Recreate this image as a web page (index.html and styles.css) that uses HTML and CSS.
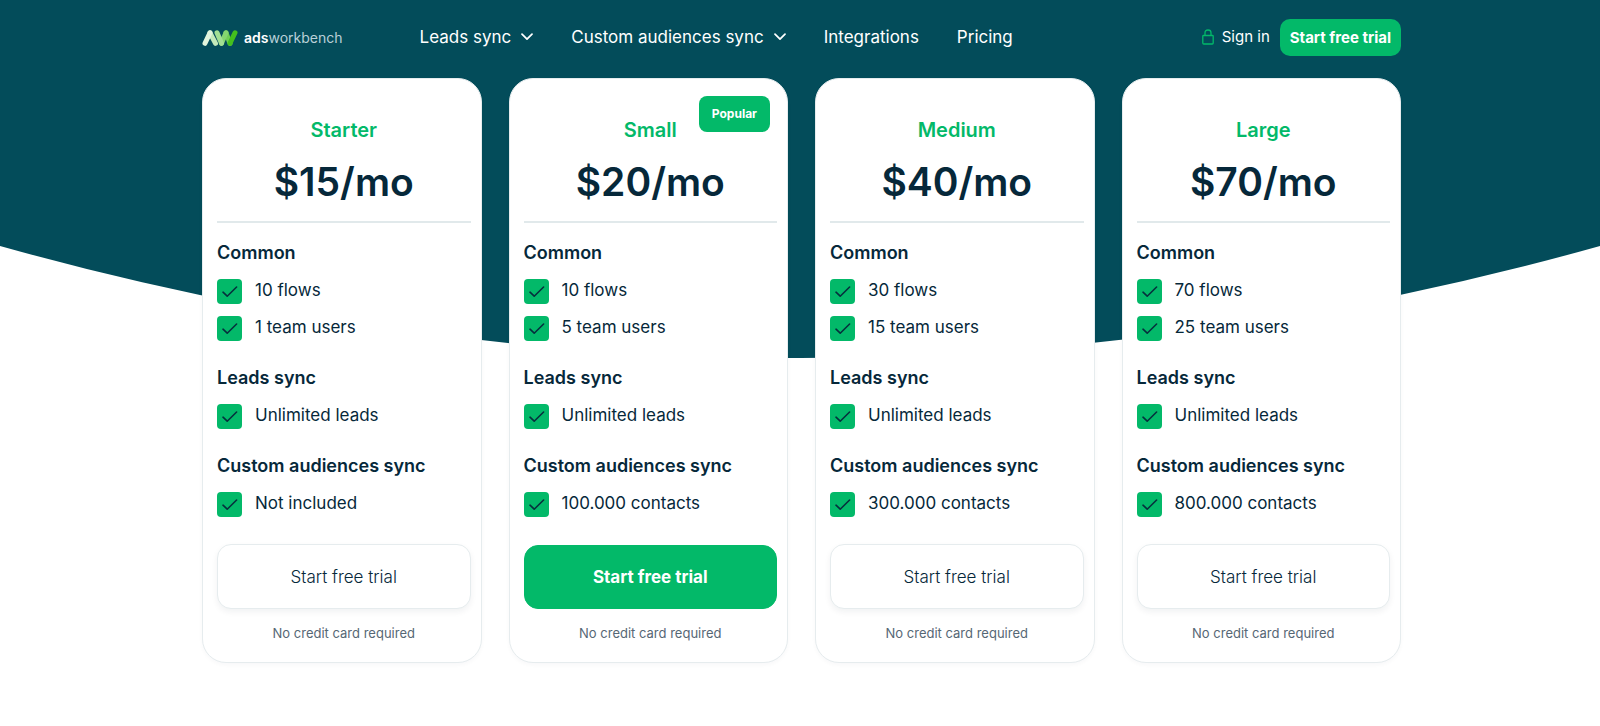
FILE: index.html
```html
<!DOCTYPE html>
<html lang="en">
<head>
<meta charset="utf-8">
<title>Pricing – adsworkbench</title>
<meta name="viewport" content="width=device-width, initial-scale=1">
<link rel="stylesheet" href="styles.css">
</head>
<body>
<svg class="backdrop" viewBox="0 0 1600 358" preserveAspectRatio="none" aria-hidden="true"><path d="M0 0H1600V246Q800 470 0 246Z" fill="#034c5a"/></svg>
<svg class="symbols" aria-hidden="true">
  <symbol id="check" viewBox="0 0 25 25"><path d="M6 13.2L10.2 17.2L19.6 8" fill="none" stroke="#06303d" stroke-width="1.6" stroke-linecap="round" stroke-linejoin="round"/></symbol>
  <symbol id="chevron" viewBox="0 0 12 8"><path d="M1 1.2L6 6.2L11 1.2" fill="none" stroke="#fff" stroke-width="1.7" stroke-linecap="round" stroke-linejoin="round"/></symbol>
</svg>
<div class="page">
  <header class="header">
    <a class="logo" href="#">
      <svg class="logo-mark" viewBox="0 0 36 18" aria-hidden="true" fill="none" stroke-width="5" stroke-linecap="round">
        <path d="M8 3.800L13.500 14.300" stroke="#c3e9ba"/>
        <path d="M3 14.300L8 3.800" stroke="#e2f5dd"/>
        <path d="M24 3.800L28 14.300" stroke="#6fce55"/>
        <path d="M19.500 14.300L24 3.800" stroke="#85d670"/>
        <path d="M15 3.800L19.500 14.300" stroke="#a2df94"/>
        <path d="M28 14.300L33 3.800" stroke="#43c01d"/>
      </svg>
      <span class="logo-text"><b>ads</b>workbench</span>
    </a>
    <nav class="nav">
      <button class="nav-item" type="button">Leads sync <svg class="chevron" aria-hidden="true"><use href="#chevron"/></svg></button>
      <button class="nav-item" type="button">Custom audiences sync <svg class="chevron" aria-hidden="true"><use href="#chevron"/></svg></button>
      <a class="nav-item" href="#">Integrations</a>
      <a class="nav-item" href="#">Pricing</a>
    </nav>
    <div class="account">
      <a class="signin" href="#"><svg class="lock" viewBox="0 0 12 16" aria-hidden="true"><path d="M1.500 6.500H10.500Q11.200 6.500 11.200 7.200V14Q11.200 15 10.200 15H1.800Q.8 15 .8 14V7.200Q.8 6.500 1.500 6.500ZM3 6.500V3.800Q3 1 6 1T9 3.800V6.500" fill="none" stroke="#03b969" stroke-width="1.300"/></svg>Sign in</a>
      <a class="cta" href="#">Start free trial</a>
    </div>
  </header>
  <main class="plans">
    <section class="plan">
      <h2 class="plan-name">Starter</h2>
      <p class="price">$15/mo</p>
      <hr class="rule">
      <h3 class="group">Common</h3>
      <ul class="features">
        <li class="feature"><svg class="check" aria-hidden="true"><use href="#check"/></svg>10 flows</li>
        <li class="feature"><svg class="check" aria-hidden="true"><use href="#check"/></svg>1 team users</li>
      </ul>
      <h3 class="group">Leads sync</h3>
      <ul class="features">
        <li class="feature"><svg class="check" aria-hidden="true"><use href="#check"/></svg>Unlimited leads</li>
      </ul>
      <h3 class="group">Custom audiences sync</h3>
      <ul class="features">
        <li class="feature"><svg class="check" aria-hidden="true"><use href="#check"/></svg>Not included</li>
      </ul>
      <button class="trial" type="button">Start free trial</button>
      <p class="note">No credit card required</p>
    </section>
    <section class="plan">
      <span class="badge">Popular</span>
      <h2 class="plan-name">Small</h2>
      <p class="price">$20/mo</p>
      <hr class="rule">
      <h3 class="group">Common</h3>
      <ul class="features">
        <li class="feature"><svg class="check" aria-hidden="true"><use href="#check"/></svg>10 flows</li>
        <li class="feature"><svg class="check" aria-hidden="true"><use href="#check"/></svg>5 team users</li>
      </ul>
      <h3 class="group">Leads sync</h3>
      <ul class="features">
        <li class="feature"><svg class="check" aria-hidden="true"><use href="#check"/></svg>Unlimited leads</li>
      </ul>
      <h3 class="group">Custom audiences sync</h3>
      <ul class="features">
        <li class="feature"><svg class="check" aria-hidden="true"><use href="#check"/></svg>100.000 contacts</li>
      </ul>
      <button class="trial trial-primary" type="button">Start free trial</button>
      <p class="note">No credit card required</p>
    </section>
    <section class="plan">
      <h2 class="plan-name">Medium</h2>
      <p class="price">$40/mo</p>
      <hr class="rule">
      <h3 class="group">Common</h3>
      <ul class="features">
        <li class="feature"><svg class="check" aria-hidden="true"><use href="#check"/></svg>30 flows</li>
        <li class="feature"><svg class="check" aria-hidden="true"><use href="#check"/></svg>15 team users</li>
      </ul>
      <h3 class="group">Leads sync</h3>
      <ul class="features">
        <li class="feature"><svg class="check" aria-hidden="true"><use href="#check"/></svg>Unlimited leads</li>
      </ul>
      <h3 class="group">Custom audiences sync</h3>
      <ul class="features">
        <li class="feature"><svg class="check" aria-hidden="true"><use href="#check"/></svg>300.000 contacts</li>
      </ul>
      <button class="trial" type="button">Start free trial</button>
      <p class="note">No credit card required</p>
    </section>
    <section class="plan">
      <h2 class="plan-name">Large</h2>
      <p class="price">$70/mo</p>
      <hr class="rule">
      <h3 class="group">Common</h3>
      <ul class="features">
        <li class="feature"><svg class="check" aria-hidden="true"><use href="#check"/></svg>70 flows</li>
        <li class="feature"><svg class="check" aria-hidden="true"><use href="#check"/></svg>25 team users</li>
      </ul>
      <h3 class="group">Leads sync</h3>
      <ul class="features">
        <li class="feature"><svg class="check" aria-hidden="true"><use href="#check"/></svg>Unlimited leads</li>
      </ul>
      <h3 class="group">Custom audiences sync</h3>
      <ul class="features">
        <li class="feature"><svg class="check" aria-hidden="true"><use href="#check"/></svg>800.000 contacts</li>
      </ul>
      <button class="trial" type="button">Start free trial</button>
      <p class="note">No credit card required</p>
    </section>
  </main>
</div>
</body>
</html>
```
FILE: styles.css
```css
* { box-sizing: border-box; }

body {
  margin: 0;
  background: #fff;
  color: #06283a;
  font-family: Inter, "Open Sans", sans-serif;
  font-size: 17px;
  line-height: 24px;
}

h2, h3, p, ul { margin: 0; padding: 0; }
a { color: inherit; text-decoration: none; }
button { font: inherit; cursor: pointer; }

.backdrop {
  position: absolute;
  top: 0;
  left: 0;
  z-index: -1;
  width: 100%;
  height: 358px;
}

.symbols { position: absolute; width: 0; height: 0; }

.page {
  max-width: 1202px;
  margin: 0 auto;
  padding: 0 0 60px 3px;
}

.header {
  display: flex;
  align-items: center;
  height: 78px;
  padding-bottom: 4px;
  color: #fff;
}

.logo { display: flex; align-items: center; gap: 6px; margin-right: 77px; padding-top: 2px; }
.logo-mark { width: 36px; height: 18px; }
.logo-text { font-size: 14px; color: #b9d0d8; }
.logo-text b { font-weight: 600; color: #fff; }

.nav { display: flex; gap: 38px; }
.nav-item {
  display: flex;
  align-items: center;
  gap: 10px;
  padding: 0;
  border: 0;
  background: none;
  color: #fff;
  font-size: 17px;
}
.chevron { width: 12px; height: 8px; }

.account { display: flex; align-items: center; gap: 10px; margin-left: auto; font-size: 15px; }
.signin { display: flex; align-items: center; gap: 8px; }
.lock { width: 12px; height: 16px; }
.cta {
  padding: 6px 10px;
  border-radius: 10px;
  background: #03b969;
  font-weight: 700;
  line-height: 25px;
}

.plans {
  display: grid;
  grid-template-columns: repeat(4, 1fr);
  gap: 27px;
}

.plan {
  position: relative;
  display: flex;
  flex-direction: column;
  padding: 36px 10px 19px 14px;
  border: 1px solid #e6ecee;
  border-radius: 24px;
  background: #fff;
  box-shadow: 0 2px 4px rgba(6, 40, 58, 0.03);
}

.plan-name {
  color: #03b969;
  font-size: 20px;
  font-weight: 600;
  line-height: 30px;
  text-align: center;
}

.price {
  margin-top: 12px;
  font-size: 39px;
  font-weight: 600;
  line-height: 50px;
  text-align: center;
}

.rule {
  width: 100%;
  height: 2px;
  margin: 14px 0 18px;
  border: 0;
  background: #e1e9eb;
}

.group { margin-bottom: 14px; font-size: 18px; font-weight: 600; }

.features {
  display: flex;
  flex-direction: column;
  gap: 12px;
  margin-bottom: 25px;
  list-style: none;
}
.feature {
  display: flex;
  align-items: flex-start;
  gap: 13px;
  height: 25px;
  font-size: 17px;
  line-height: 22px;
}
.check {
  width: 25px;
  height: 25px;
  border-radius: 4px;
  background: #03b969;
}

.trial {
  height: 65px;
  margin-top: 2px;
  border: 1px solid #e6ecee;
  border-radius: 14px;
  background: #fff;
  color: #06283a;
  font-weight: 300;
  box-shadow: 0 3px 6px rgba(6, 40, 58, 0.06);
}
.trial-primary {
  height: 64px;
  margin-top: 3px;
  border-color: #03b969;
  background: #03b969;
  color: #fff;
  font-weight: 700;
  box-shadow: none;
}

.note {
  margin-top: 14px;
  color: #566775;
  font-size: 13px;
  line-height: 20px;
  text-align: center;
}

.badge {
  position: absolute;
  top: 17px;
  right: 17px;
  padding: 6px 13px;
  border-radius: 8px;
  background: #03b969;
  color: #fff;
  font-size: 12px;
  font-weight: 700;
}
```
